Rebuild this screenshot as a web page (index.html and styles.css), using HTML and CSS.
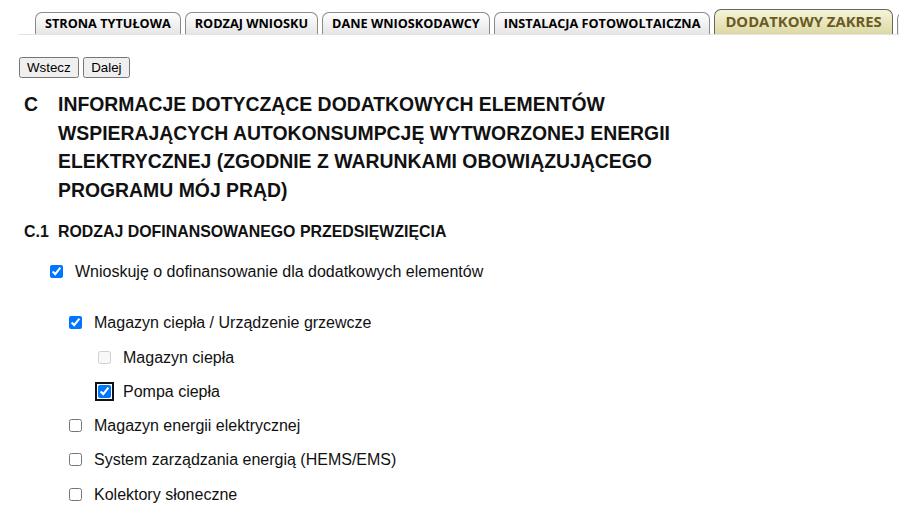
FILE: index.html
```html
<!DOCTYPE html>
<html>
<head>
	<meta charset="utf-8">
	<title>Dodatkowy zakres</title>
	<link rel="stylesheet" href="styles.css">
</head>
<body>
	<ul class="tabs">
		<li class="tab">STRONA TYTUŁOWA</li>
		<li class="tab">RODZAJ WNIOSKU</li>
		<li class="tab">DANE WNIOSKODAWCY</li>
		<li class="tab">INSTALACJA FOTOWOLTAICZNA</li>
		<li class="tab active">DODATKOWY ZAKRES</li>
		<li class="tab stub"></li>
	</ul>

	<div class="nav_buttons">
		<button>Wstecz</button>
		<button>Dalej</button>
	</div>

	<div class="section_title">
		<span class="num">C</span>
		<span class="txt">INFORMACJE DOTYCZĄCE DODATKOWYCH ELEMENTÓW WSPIERAJĄCYCH AUTOKONSUMPCJĘ WYTWORZONEJ ENERGII ELEKTRYCZNEJ (ZGODNIE Z WARUNKAMI OBOWIĄZUJĄCEGO PROGRAMU MÓJ PRĄD)</span>
	</div>

	<div class="sub_title">
		<span class="num">C.1</span>
		<span class="txt">RODZAJ DOFINANSOWANEGO PRZEDSIĘWZIĘCIA</span>
	</div>

	<div class="options">
		<label class="opt lvl0"><input type="checkbox" checked> Wnioskuję o dofinansowanie dla dodatkowych elementów</label>
		<label class="opt lvl1 spaced"><input type="checkbox" checked> Magazyn ciepła / Urządzenie grzewcze</label>
		<label class="opt lvl2"><input type="checkbox" disabled> Magazyn ciepła</label>
		<label class="opt lvl2"><input type="checkbox" class="focused" checked> Pompa ciepła</label>
		<label class="opt lvl1"><input type="checkbox"> Magazyn energii elektrycznej</label>
		<label class="opt lvl1"><input type="checkbox"> System zarządzania energią (HEMS/EMS)</label>
		<label class="opt lvl1"><input type="checkbox"> Kolektory słoneczne</label>
	</div>
</body>
</html>
```

FILE: styles.css
```css
body{
	margin: 0;
	font-family: "Liberation Sans", Arial, sans-serif;
	color: #111;
	background: #fff;
}
.tabs{
	list-style: none;
	display: flex;
	align-items: flex-end;
	gap: 4px;
	margin: 0 0 0 19px;
	padding: 9px 0 0 16px;
	height: 25px;
	border-bottom: 1px solid #e2e2e2;
	overflow: hidden;
	white-space: nowrap;
}
.tab{
	flex: none;
	height: 21px;
	line-height: 21px;
	padding: 0 9px;
	border: 1px solid #8a8a8a;
	border-bottom: none;
	border-radius: 7px 7px 0 0;
	background: linear-gradient(#ffffff, #e6e6e6);
	font-family: "Open Sans", sans-serif;
	font-weight: bold;
	font-size: 12.7px;
	color: #000;
}
.tab.active{
	height: 24px;
	line-height: 22px;
	padding: 0 10px;
	border-color: #666;
	background: linear-gradient(#f6f4d8, #dcd9a6);
	font-size: 14.8px;
	color: #6a5a24;
}
.tab.stub{
	width: 30px;
}
.nav_buttons{
	margin: 22px 0 0 19px;
}
button{
	font-family: "Liberation Sans", Arial, sans-serif;
	font-size: 13.33px;
	margin: 0;
}
.section_title{
	display: grid;
	grid-template-columns: 34px 640px;
	margin: 12px 0 0 24px;
	font-weight: bold;
	font-size: 19.4px;
	line-height: 28.5px;
}
.sub_title{
	display: grid;
	grid-template-columns: 34px auto;
	margin: 18px 0 0 24px;
	font-weight: bold;
	font-size: 15.9px;
	line-height: 20px;
}
.options{
	display: flex;
	flex-direction: column;
	gap: 15.3px;
	margin-top: 20px;
	font-size: 16px;
}
.opt{
	display: flex;
	align-items: center;
	height: 19px;
	line-height: 19px;
}
.opt input{
	width: 13px;
	height: 13px;
	margin: 0 12px 0 0;
}
.lvl0{ margin-left: 50px; }
.lvl1{ margin-left: 69px; }
.lvl2{ margin-left: 98px; }
.spaced{ margin-top: 17px; }
.focused{
	outline: 2px solid #111;
	outline-offset: 1px;
	border-radius: 3px;
}
```
